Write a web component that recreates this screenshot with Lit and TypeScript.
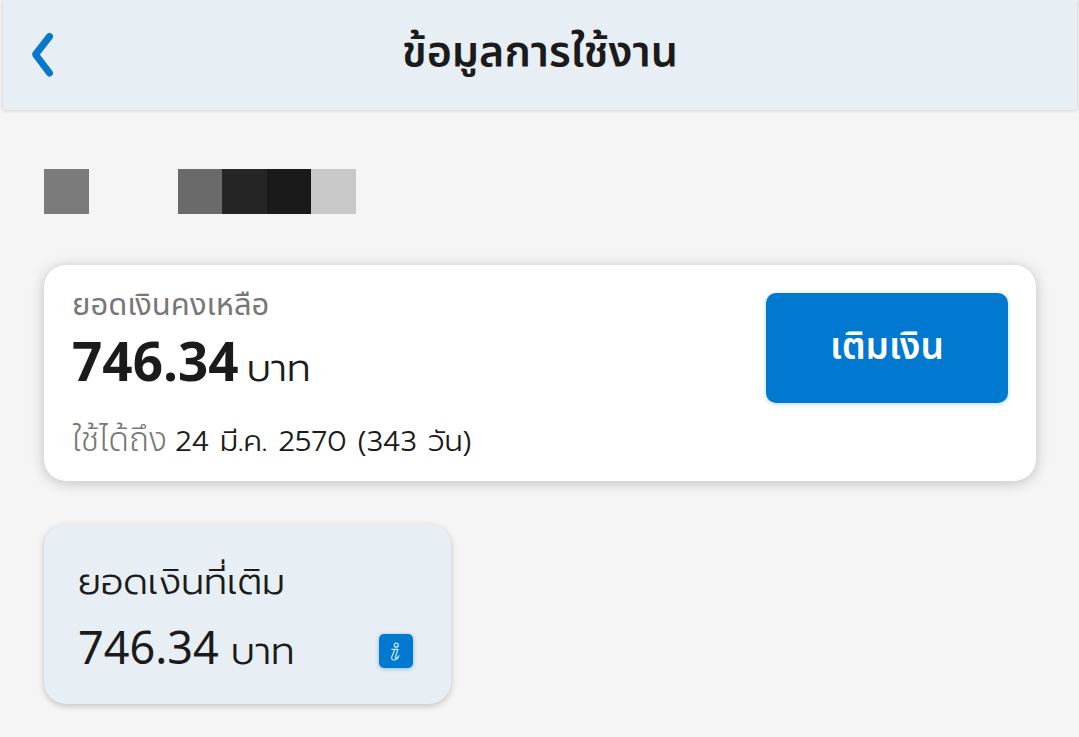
import { LitElement, html, css } from "lit";

class InfoButton extends LitElement {
  static styles = css`
    :host { display: block; }
    button {
      display: block;
      width: 34px;
      height: 34px;
      padding: 0;
      border: 0;
      border-radius: 5px;
      background: #0279d1;
      box-shadow: 0 1px 4px rgba(2, 121, 209, 0.4);
    }
    svg { display: block; }
  `;
  render() {
    return html`<button aria-label="รายละเอียด">
      <svg width="34" height="34" viewBox="0 0 34 34" fill="none" stroke="#c8ebff" stroke-width="1.2" stroke-linecap="round" stroke-linejoin="round">
        <circle cx="17.3" cy="11.2" r="2" />
        <path d="M12.8 15.3h6.2l-2.6 7.6c-.3 1 .2 1.4 1 1.1 1-.3 1.8-1.2 2.4-2.2M15.8 15.5l-3 7.300c-.7 2 .4 3.400 2.300 3.200 2.200-.2 3.900-2 4.700-4.200" />
      </svg>
    </button>`;
  }
}
customElements.define("info-button", InfoButton);

class AppRoot extends LitElement {
  static styles = css`
    :host {
      display: block;
      min-height: 100vh;
      box-sizing: border-box;
      background: #f5f5f5;
      color: #1b1b1b;
      font-family: Prompt, "Noto Sans Thai", "Noto Sans", sans-serif;
      font-weight: 300;
    }
    header {
      display: grid;
      grid-template-columns: 80px 1fr 80px;
      align-items: center;
      height: 110px;
      margin: 0 2px 0 3px;
      border-radius: 0 0 3px 3px;
      background: #e7eef4;
      box-shadow: 0 0 4px rgba(0, 0, 0, 0.2);
    }
    .back {
      justify-self: start;
      padding: 0;
      margin-left: 24px;
      border: 0;
      background: none;
    }
    .back svg { display: block; }
    h1 {
      margin: 0;
      padding-bottom: 4px;
      text-align: center;
      font-family: "Noto Sans Thai", Prompt, sans-serif;
      font-size: 43px;
      line-height: 60px;
      font-weight: 600;
    }
    main { padding: 59px 43px 32px 44px; }
    .masked {
      display: grid;
      grid-template-columns: repeat(7, 1fr);
      width: 312px;
      height: 45px;
    }
    .m1 { background: #7b7b7b; }
    .m2 { background: #6a6a6a; grid-column: 4; }
    .m3 { background: #252525; }
    .m4 { background: #1a1a1a; }
    .m5 { background: #c8c8c8; }
    .balance {
      display: flex;
      justify-content: space-between;
      align-items: flex-start;
      margin-top: 51px;
      padding: 20px 28px;
      border-radius: 22px;
      background: #fff;
      box-shadow: 0 2px 14px rgba(0, 0, 0, 0.22);
    }
    p { margin: 0; white-space: nowrap; }
    .grey { color: #777; }
    .label {
      font-family: "Noto Sans Thai", Prompt, sans-serif;
      font-size: 31px;
      line-height: 42px;
      font-weight: 400;
    }
    .amount, .sum {
      display: flex;
      align-items: baseline;
      font-size: 38px;
    }
    .amount { gap: 8px; height: 74px; line-height: 76px; }
    .sum { gap: 12px; height: 64px; line-height: 68px; }
    .amount strong, .sum span { font-family: "Noto Sans Thai", "Noto Sans", sans-serif; }
    .amount strong { font-size: 53px; font-weight: 700; }
    .sum span { font-size: 45px; font-weight: 400; }
    .until {
      display: flex;
      align-items: baseline;
      gap: 8px;
      height: 40px;
      margin-top: 20px;
      font-size: 29px;
      line-height: 40px;
    }
    .until .grey {
      font-family: "Noto Sans Thai", Prompt, sans-serif;
      font-size: 34px;
      font-weight: 350;
    }
    .topup {
      width: 242px;
      height: 110px;
      margin-top: 8px;
      padding: 0;
      border: 0;
      border-radius: 10px;
      background: #0279d1;
      box-shadow: 0 1px 5px rgba(2, 121, 209, 0.3);
      color: #fff;
      font-family: "Noto Sans Thai", Prompt, sans-serif;
      font-size: 37px;
      font-weight: 600;
    }
    .topped {
      display: flex;
      justify-content: space-between;
      align-items: flex-end;
      width: 407px;
      max-width: 100%;
      box-sizing: border-box;
      margin-top: 43px;
      padding: 24px 38px 24px 34px;
      border-radius: 22px;
      background: #e7eef4;
      box-shadow: 0 2px 6px rgba(0, 0, 0, 0.22);
    }
    .title { font-size: 37px; line-height: 68px; }
    info-button { margin-bottom: 12px; }
  `;
  render() {
    return html`
      <header>
        <button class="back" aria-label="ย้อนกลับ">
          <svg width="32" height="48" viewBox="0 0 32 48" fill="none">
            <path d="M22.500 5.500L8.500 23.500L22.500 42" stroke="#0a78ca" stroke-width="7" stroke-linecap="round" stroke-linejoin="round" />
          </svg>
        </button>
        <h1>ข้อมูลการใช้งาน</h1>
      </header>
      <main>
        <div class="masked">
          <span class="m1"></span><span class="m2"></span><span class="m3"></span><span class="m4"></span><span class="m5"></span>
        </div>
        <section class="balance">
          <div>
            <p class="label grey">ยอดเงินคงเหลือ</p>
            <p class="amount"><strong>746.34</strong> บาท</p>
            <p class="until"><span class="grey">ใช้ได้ถึง</span> 24 มี.ค. 2570 (343 วัน)</p>
          </div>
          <button class="topup">เติมเงิน</button>
        </section>
        <section class="topped">
          <div>
            <p class="title">ยอดเงินที่เติม</p>
            <p class="sum"><span>746.34</span> บาท</p>
          </div>
          <info-button></info-button>
        </section>
      </main>
    `;
  }
}
customElements.define("app-root", AppRoot);
